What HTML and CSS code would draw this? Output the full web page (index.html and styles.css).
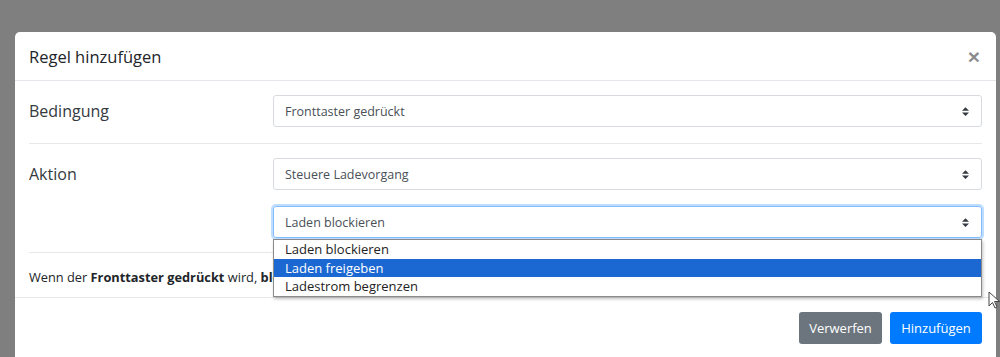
FILE: index.html
```html
<!DOCTYPE html>
<html lang="de">
<head>
    <meta charset="UTF-8">
    <meta name="viewport" content="width=device-width, initial-scale=1.0">
    <title>Regel hinzufügen</title>
    <link rel="stylesheet" href="styles.css">
</head>
<body>

    <div class="modal">
        <div class="modal-header">
            <h5 class="modal-title">Regel hinzufügen</h5>
            <button class="close" type="button">&times;</button>
        </div>

        <div class="modal-body">
            <div class="form-row">
                <label class="col-label">Bedingung</label>
                <div class="custom-select">
                    <span>Fronttaster gedrückt</span>
                    <svg class="caret" width="8" height="10" viewBox="0 0 4 5"><path d="M2 0L0 2h4zm0 5L0 3h4z"/></svg>
                </div>
            </div>

            <hr>

            <div class="form-row">
                <label class="col-label">Aktion</label>
                <div class="custom-select">
                    <span>Steuere Ladevorgang</span>
                    <svg class="caret" width="8" height="10" viewBox="0 0 4 5"><path d="M2 0L0 2h4zm0 5L0 3h4z"/></svg>
                </div>
            </div>

            <div class="form-row sub-row">
                <div></div>
                <div class="select-wrap">
                    <div class="custom-select focus">
                        <span>Laden blockieren</span>
                        <svg class="caret" width="8" height="10" viewBox="0 0 4 5"><path d="M2 0L0 2h4zm0 5L0 3h4z"/></svg>
                    </div>
                    <ul class="dropdown">
                        <li>Laden blockieren</li>
                        <li class="selected">Laden freigeben</li>
                        <li>Ladestrom begrenzen</li>
                    </ul>
                </div>
            </div>

            <hr class="last">

            <p class="summary">Wenn der <b>Fronttaster gedrückt</b> wird, <b>blockiere das Laden</b>.</p>
        </div>

        <div class="modal-footer">
            <button class="btn btn-secondary" type="button">Verwerfen</button>
            <button class="btn btn-primary" type="button">Hinzufügen</button>
        </div>
    </div>

    <svg class="cursor" width="12" height="18" viewBox="0 0 12 18">
        <path d="M1 1v14l3.5-3.5 2.5 5.5 2-1-2.5-5.5h5z" fill="#fff" stroke="#444" stroke-width="1"/>
    </svg>

</body>
</html>
```

FILE: styles.css
```css
body {
    margin: 0;
    background-color: #7f7f7f;
    font-family: "Open Sans", Arial, sans-serif;
    color: #212529;
    height: 357px;
    overflow: hidden;
    position: relative;
}
.modal {
    margin: 32px 0 0 15px;
    width: 981px;
    height: 340px;
    background-color: #fff;
    border-radius: 5px 5px 0 0;
}
.modal-header {
    height: 48px;
    padding: 0 14px;
    display: flex;
    align-items: center;
    justify-content: space-between;
    border-bottom: 1px solid #e3e6ea;
}
.modal-title {
    margin: 0;
    font-size: 16.5px;
    font-weight: 400;
}
.close {
    border: none;
    background: none;
    padding: 0;
    margin-right: 2px;
    font-family: Arial, sans-serif;
    font-size: 21px;
    font-weight: 700;
    line-height: 1;
    color: #000;
    opacity: .45;
}
.modal-body {
    padding: 14px 14px 0;
}
.form-row {
    display: grid;
    grid-template-columns: 244px 1fr;
    align-items: center;
}
.sub-row {
    margin-top: 16px;
}
.col-label {
    font-size: 16px;
    color: #343a40;
}
.custom-select {
    height: 32px;
    box-sizing: border-box;
    border: 1px solid #d7dbe0;
    border-radius: 3px;
    padding: 0 11px;
    display: flex;
    align-items: center;
    justify-content: space-between;
    font-size: 12.5px;
    color: #495057;
}
.custom-select.focus {
    border-color: #80bdff;
    box-shadow: 0 0 0 2px rgba(0, 123, 255, .25);
}
.caret {
    fill: #343a40;
    width: 7px;
    height: 9px;
    margin-right: 1px;
}
.select-wrap {
    position: relative;
}
/* open native list, lies over the summary line */
.dropdown {
    position: absolute;
    top: 100%;
    left: 0;
    right: 0;
    margin: 1px 0 0;
    padding: 0;
    list-style: none;
    background-color: #fff;
    border: 1px solid #8a8a8a;
    box-shadow: 1px 2px 3px rgba(0, 0, 0, .25);
    z-index: 2;
}
.dropdown li {
    height: 18.5px;
    line-height: 18.5px;
    padding-left: 11px;
    font-size: 13px;
    color: #222;
}
.dropdown li.selected {
    background-color: #1b68d2;
    color: #fff;
}
hr {
    margin: 16px 0 0;
    border: none;
    border-top: 1px solid #e6e8eb;
}
.form-row + hr + .form-row {
    margin-top: 14px;
}
hr.last {
    margin-top: 14px;
}
.summary {
    margin: 0;
    padding: 14px 0 10px;
    white-space: nowrap;
    line-height: 20px;
    font-size: 12.8px;
    color: #212529;
}
.modal-footer {
    border-top: 1px solid #e6e8eb;
    padding: 14px 14px;
    display: flex;
    justify-content: flex-end;
    gap: 8px;
}
.btn {
    height: 32px;
    border: none;
    border-radius: 3px;
    padding: 0 10px;
    font-family: "Open Sans", Arial, sans-serif;
    font-size: 13px;
    color: #fff;
}
.btn-secondary {
    background-color: #6c757d;
    width: 83px;
}
.btn-primary {
    background-color: #007bff;
    width: 92px;
}
.cursor {
    position: absolute;
    left: 988px;
    top: 291px;
}
```
